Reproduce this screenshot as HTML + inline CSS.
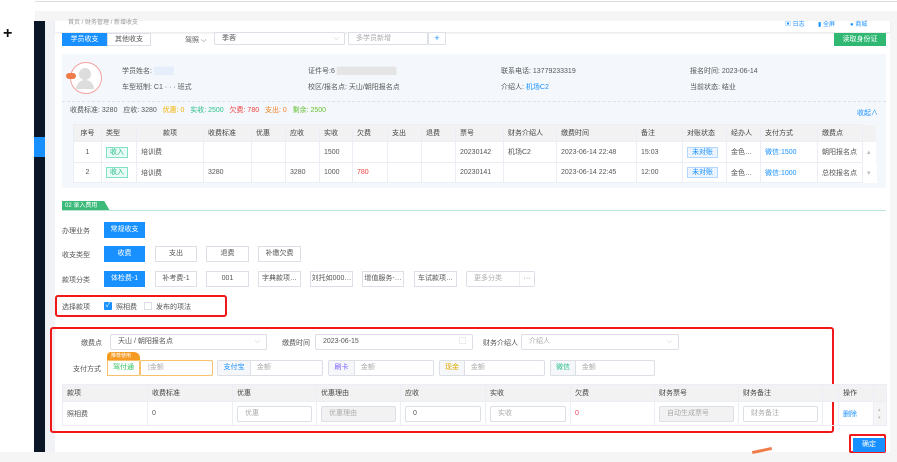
<!DOCTYPE html>
<html><head><meta charset="utf-8"><style>
*{margin:0;padding:0;box-sizing:border-box}
body{width:897px;height:462px;overflow:hidden;background:#fff;font-family:"Liberation Sans","Noto Sans CJK SC",sans-serif;font-size:7px;color:#555;position:relative}
.a{position:absolute;white-space:nowrap}
.btn{position:absolute;border:1px solid #dcdfe6;background:#fff;text-align:center;color:#555;font-size:7px}
.bl{background:#1890ff;color:#fff;border-color:#1890ff}
.inp{position:absolute;border:1px solid #dcdfe6;background:#fff;color:#aaa;font-size:7px;padding-left:7px;border-radius:2px}
table{border-collapse:collapse;position:absolute;font-size:7px;table-layout:fixed}
td{border:1px solid #ebeef5;padding:0 4px;white-space:nowrap;overflow:hidden;color:#555}
.hd td{background:#f2f2f2;color:#444}
.tag{display:inline-block;border:1px solid #80e0c8;background:#e8fbf5;color:#2bbf8a;padding:0 3px;line-height:9px}
.tg2{display:inline-block;border:1px solid #b3d8ff;background:#ecf5ff;color:#1890ff;padding:0 4px;line-height:9px}
</style></head><body>
<div class="a" style="left:35px;top:1px;width:862px;height:1px;background:#ddd"></div>
<div class="a" style="left:35px;top:11px;width:862px;height:10px;background:#f5f5f5"></div>
<div class="a" style="left:3px;top:25px;font-size:16px;color:#111;font-weight:bold">+</div>
<div class="a" style="left:34px;top:21px;width:11px;height:431px;background:#0b1726"></div>
<div class="a" style="left:34px;top:137px;width:11px;height:20px;background:#1890ff"></div>
<div class="a" style="left:45px;top:21px;width:10px;height:431px;background:#f0f2f5"></div>
<div class="a" style="left:0;top:452px;width:897px;height:10px;background:#f5f5f5"></div>
<div class="a" style="left:890px;top:21px;width:7px;height:431px;background:#f5f5f5"></div>
<div class="a" style="left:55px;top:21px;width:835px;height:11px;background:#fff;box-shadow:0 1px 2px #e5e5e5"></div>
<div class="a" style="left:68px;top:21px;font-size:6px;color:#999;line-height:4px">首页 / 财务管理 / 新增收支</div>
<div class="a" style="left:785px;top:19px;font-size:6px;color:#1890ff">▣ 日志 &nbsp;&nbsp;&nbsp;&nbsp;&nbsp;&nbsp; ▮ 全屏 &nbsp;&nbsp;&nbsp;&nbsp;&nbsp;&nbsp;&nbsp; ● 商城</div>

<div class="btn bl" style="left:62px;top:33px;width:45px;height:13px;line-height:11px">学员收支</div>
<div class="btn" style="left:107px;top:33px;width:44px;height:13px;line-height:11px">其他收支</div>
<div class="a" style="left:185px;top:35px">驾照 ⌵</div>
<div class="inp" style="left:214px;top:32px;width:131px;height:13px;line-height:11px;color:#555">季蓉<span style="float:right;margin-right:5px;color:#bbb">⌵</span></div>
<div class="inp" style="left:348px;top:32px;width:80px;height:13px;line-height:11px">多学员新增</div>
<div class="btn" style="left:428px;top:32px;width:18px;height:13px;line-height:11px;color:#1890ff;font-size:9px">+</div>
<div class="btn" style="left:834px;top:33px;width:52px;height:13px;line-height:11px;background:#2eb872;border-color:#2eb872;color:#fff">读取身份证</div>

<div class="a" style="left:62px;top:54px;width:824px;height:134px;background:#f4f8fc"></div>
<div class="a" style="left:70px;top:62px;width:32px;height:32px;border:1px solid #f5a0a0;border-radius:50%;background:#fff"></div>
<div class="a" style="left:79px;top:68px;width:12px;height:12px;border-radius:50%;background:#ddd"></div>
<div class="a" style="left:76px;top:80px;width:18px;height:9px;border-radius:9px 9px 0 0;background:#ddd"></div>
<div class="a" style="left:66px;top:73px;width:10px;height:6px;border-radius:3px;background:#f07c4a"></div>
<div class="a" style="left:122px;top:66px">学员姓名: <span style="background:#e6eefc;color:#e6eefc">████</span></div>
<div class="a" style="left:122px;top:82px">车型班制: C1 · · · 班式</div>
<div class="a" style="left:308px;top:66px">证件号:6 <span style="background:#e5e5e5;color:#e5e5e5">████████████</span></div>
<div class="a" style="left:308px;top:82px">校区/报名点: 天山/朝阳报名点</div>
<div class="a" style="left:501px;top:66px">联系电话: 13779233319</div>
<div class="a" style="left:501px;top:82px">介绍人: <span style="color:#1890ff">机场C2</span></div>
<div class="a" style="left:690px;top:66px">报名时间: 2023-06-14</div>
<div class="a" style="left:690px;top:82px">当前状态: 结业</div>
<div class="a" style="left:62px;top:101px;width:824px;border-top:1px dashed #dde3ea"></div>
<div class="a" style="left:70px;top:105px">收费标准: 3280 &nbsp;&nbsp;应收: 3280 &nbsp;&nbsp;<span style="color:#f5b000">优惠: 0</span> &nbsp;&nbsp;<span style="color:#2bbf8a">实收: 2500</span> &nbsp;&nbsp;<span style="color:#f04040">欠费: 780</span> &nbsp;&nbsp;<span style="color:#f08020">支出: 0</span> &nbsp;&nbsp;<span style="color:#66c030">剩余: 2500</span></div>
<div class="a" style="left:857px;top:108px;color:#1890ff">收起∧</div>

<table style="left:73px;top:124px;width:803px">
<colgroup><col style="width:28px"><col style="width:35px"><col style="width:67px"><col style="width:48px"><col style="width:34px"><col style="width:34px"><col style="width:33px"><col style="width:35px"><col style="width:34px"><col style="width:34px"><col style="width:48px"><col style="width:53px"><col style="width:80px"><col style="width:46px"><col style="width:44px"><col style="width:34px"><col style="width:57px"><col style="width:45px"><col style="width:14px"></colgroup>
<tr class="hd" style="height:17px"><td style="text-align:center">序号</td><td>类型</td><td style="text-align:center">款项</td><td>收费标准</td><td>优惠</td><td>应收</td><td>实收</td><td>欠费</td><td>支出</td><td>退费</td><td>票号</td><td>财务介绍人</td><td>缴费时间</td><td>备注</td><td>对账状态</td><td>经办人</td><td>支付方式</td><td>缴费点</td><td style="border:none"></td></tr>
<tr style="height:21px;background:#fff"><td style="text-align:center">1</td><td><span class="tag">收入</span></td><td>培训费</td><td></td><td></td><td></td><td>1500</td><td></td><td></td><td></td><td>20230142</td><td>机场C2</td><td>2023-06-14 22:48</td><td>15:03</td><td><span class="tg2">未对账</span></td><td>金色…</td><td style="color:#1890ff">微信:1500</td><td>朝阳报名点</td><td style="border:none;color:#bbb">▴</td></tr>
<tr style="height:20px;background:#fff"><td style="text-align:center">2</td><td><span class="tag">收入</span></td><td>培训费</td><td>3280</td><td></td><td>3280</td><td>1000</td><td style="color:#f04040">780</td><td></td><td></td><td>20230141</td><td></td><td>2023-06-14 22:45</td><td>12:00</td><td><span class="tg2">未对账</span></td><td>金色…</td><td style="color:#1890ff">微信:1000</td><td>总校报名点</td><td style="border:none;color:#bbb">▾</td></tr>
</table>

<div class="a" style="left:62px;top:201px;width:48px;height:10px;background:#3cba7a;color:#fff;font-size:6px;line-height:10px;padding-left:3px;clip-path:polygon(0 0,88% 0,100% 100%,0 100%)">02 录入费用</div>
<div class="a" style="left:62px;top:210px;width:824px;height:1px;background:#b8e6d0"></div>

<div class="a" style="left:62px;top:226px">办理业务</div>
<div class="btn bl" style="left:104px;top:222px;width:41px;height:16px;line-height:14px">常规收支</div>
<div class="a" style="left:62px;top:250px">收支类型</div>
<div class="btn bl" style="left:104px;top:246px;width:41px;height:16px;line-height:14px">收费</div>
<div class="btn" style="left:155px;top:246px;width:42px;height:16px;line-height:14px">支出</div>
<div class="btn" style="left:206px;top:246px;width:43px;height:16px;line-height:14px">退费</div>
<div class="btn" style="left:258px;top:246px;width:43px;height:16px;line-height:14px">补缴欠费</div>
<div class="a" style="left:62px;top:275px">款项分类</div>
<div class="btn bl" style="left:104px;top:271px;width:41px;height:16px;line-height:14px">体检费-1</div>
<div class="btn" style="left:155px;top:271px;width:42px;height:16px;line-height:14px">补考费-1</div>
<div class="btn" style="left:206px;top:271px;width:43px;height:16px;line-height:14px">001</div>
<div class="btn" style="left:258px;top:271px;width:43px;height:16px;line-height:14px">字典款项…</div>
<div class="btn" style="left:310px;top:271px;width:43px;height:16px;line-height:14px">刘托如000…</div>
<div class="btn" style="left:362px;top:271px;width:42px;height:16px;line-height:14px">增值服务-…</div>
<div class="btn" style="left:414px;top:271px;width:43px;height:16px;line-height:14px">车试款项…</div>
<div class="inp" style="left:466px;top:271px;width:69px;height:16px;line-height:14px">更多分类<span style="float:right;width:15px;border-left:1px solid #eee;text-align:center;color:#666">···</span></div>

<div class="a" style="left:55px;top:295px;width:172px;height:22px;border:2px solid #f01818;border-radius:3px"></div>
<div class="a" style="left:62px;top:302px">选择款项</div>
<div class="a" style="left:104px;top:302px;width:8px;height:8px;background:#1890ff;border-radius:1px;color:#fff;font-size:7px;line-height:8px;text-align:center">✓</div>
<div class="a" style="left:116px;top:302px">照相费</div>
<div class="a" style="left:144px;top:302px;width:8px;height:8px;border:1px solid #dcdfe6"></div>
<div class="a" style="left:156px;top:302px">发布的项法</div>

<div class="a" style="left:50px;top:327px;width:784px;height:106px;border:2px solid #f01818;border-radius:3px"></div>
<div class="a" style="left:81px;top:338px">缴费点</div>
<div class="inp" style="left:110px;top:334px;width:157px;height:16px;line-height:14px;color:#555">天山 / 朝阳报名点<span style="float:right;margin-right:6px;color:#bbb">⌵</span></div>
<div class="a" style="left:282px;top:338px">缴费时间</div>
<div class="inp" style="left:315px;top:334px;width:158px;height:16px;line-height:14px;color:#555">2023-06-15<span style="float:right;margin-right:6px;color:#bbb">▢</span></div>
<div class="a" style="left:483px;top:338px">财务介绍人</div>
<div class="inp" style="left:521px;top:334px;width:158px;height:16px;line-height:14px">介绍人<span style="float:right;margin-right:6px;color:#bbb">⌵</span></div>

<div class="a" style="left:73px;top:364px">支付方式</div>
<div class="a" style="left:107px;top:352px;width:33px;height:9px;background:#f59a23;color:#fff;font-size:5px;line-height:9px;padding-left:4px;border-radius:4px 6px 0 0">推荐使用</div>
<div class="a" style="left:107px;top:360px;width:33px;height:16px;border:1px solid #f5c16c;color:#2bbf5a;text-align:center;line-height:14px">驾付通</div>
<div class="inp" style="left:140px;top:360px;width:73px;height:16px;line-height:14px;border-color:#f5c16c">|金额</div>
<div class="inp" style="left:217px;top:360px;width:106px;height:16px;line-height:14px;padding:0"><span style="display:inline-block;width:33px;text-align:center;color:#1890ff;background:#f5f7fa;border-right:1px solid #dcdfe6">支付宝</span>&nbsp;&nbsp;&nbsp;金额</div>
<div class="inp" style="left:328px;top:360px;width:106px;height:16px;line-height:14px;padding:0"><span style="display:inline-block;width:26px;text-align:center;color:#7a5af8;background:#f5f7fa;border-right:1px solid #dcdfe6">刷卡</span>&nbsp;&nbsp;&nbsp;金额</div>
<div class="inp" style="left:439px;top:360px;width:106px;height:16px;line-height:14px;padding:0"><span style="display:inline-block;width:25px;text-align:center;color:#e0a800;background:#f5f7fa;border-right:1px solid #dcdfe6">现金</span>&nbsp;&nbsp;&nbsp;金额</div>
<div class="inp" style="left:550px;top:360px;width:105px;height:16px;line-height:14px;padding:0"><span style="display:inline-block;width:25px;text-align:center;color:#2bbf8a;background:#f5f7fa;border-right:1px solid #dcdfe6">微信</span>&nbsp;&nbsp;&nbsp;金额</div>

<table style="left:62px;top:384px;width:824px">
<colgroup><col style="width:85px"><col style="width:85px"><col style="width:84px"><col style="width:84px"><col style="width:85px"><col style="width:85px"><col style="width:84px"><col style="width:84px"><col style="width:84px"><col style="width:16px"><col style="width:35px"><col style="width:13px"></colgroup>
<tr class="hd" style="height:17px"><td>款项</td><td>收费标准</td><td>优惠</td><td>优惠理由</td><td>应收</td><td>实收</td><td>欠费</td><td>财务票号</td><td>财务备注</td><td></td><td>操作</td><td style="background:#f2f2f2"></td></tr>
<tr style="height:24px"><td>照相费</td><td>0</td>
<td><div style="border:1px solid #dcdfe6;height:16px;line-height:14px;padding-left:7px;color:#aaa;border-radius:2px">优惠</div></td>
<td><div style="border:1px solid #dcdfe6;background:#f2f2f2;height:16px;line-height:14px;padding-left:7px;color:#aaa;border-radius:2px">优惠理由</div></td>
<td><div style="border:1px solid #dcdfe6;height:16px;line-height:14px;padding-left:7px;color:#555;border-radius:2px">0</div></td>
<td><div style="border:1px solid #dcdfe6;height:16px;line-height:14px;padding-left:7px;color:#aaa;border-radius:2px">实收</div></td>
<td style="color:#f04060">0</td>
<td><div style="border:1px solid #dcdfe6;background:#f2f2f2;height:16px;line-height:14px;padding-left:7px;color:#aaa;border-radius:2px">自动生成票号</div></td>
<td><div style="border:1px solid #dcdfe6;height:16px;line-height:14px;padding-left:7px;color:#aaa;border-radius:2px">财务备注</div></td>
<td></td><td style="color:#1890ff">删除</td><td style="color:#bbb;font-size:5px;line-height:8px;background:#f5f5f5">▴<br>▾</td></tr>
</table>

<div class="a" style="left:849px;top:434px;width:37px;height:19px;border:2px solid #f01818;border-radius:2px"></div>
<div class="a" style="left:853px;top:438px;width:32px;height:14px;background:#1890ff;color:#fff;text-align:center;line-height:14px">确定</div>
<div class="a" style="left:752px;top:449px;width:20px;height:3px;background:#f07c4a;transform:rotate(-12deg)"></div>
</body></html>
